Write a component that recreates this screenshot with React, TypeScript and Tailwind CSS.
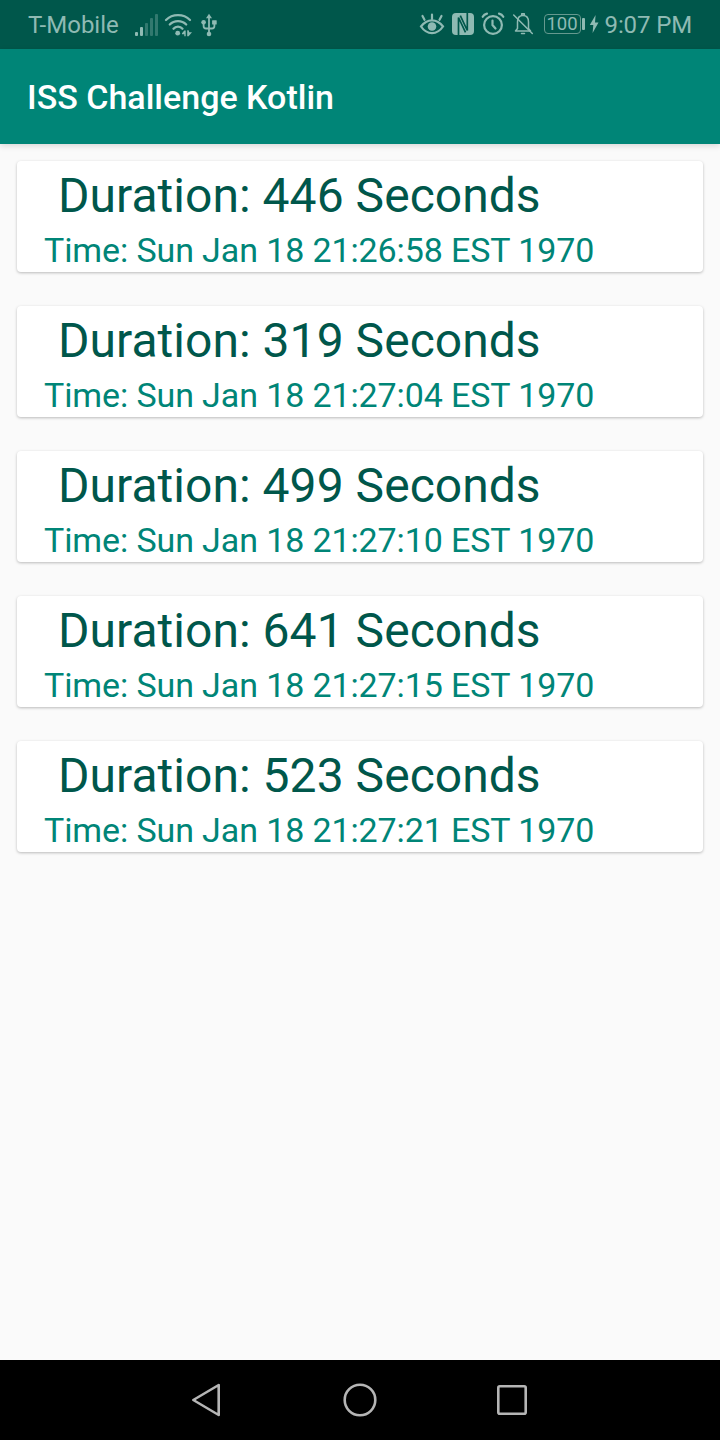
import React from "react";

const passes = [
  { duration: 446, time: "Sun Jan 18 21:26:58 EST 1970" },
  { duration: 319, time: "Sun Jan 18 21:27:04 EST 1970" },
  { duration: 499, time: "Sun Jan 18 21:27:10 EST 1970" },
  { duration: 641, time: "Sun Jan 18 21:27:15 EST 1970" },
  { duration: 523, time: "Sun Jan 18 21:27:21 EST 1970" },
];

function SignalIcon() {
  return (
    <svg width="24" height="24" viewBox="0 0 24 24" fill="currentColor" className="shrink-0">
      <rect x="1" y="19" width="3" height="4" rx="1" />
      <rect x="6" y="14" width="3" height="9" rx="1" />
      <g opacity="0.35">
        <rect x="11" y="10" width="3" height="13" rx="1" />
        <rect x="16" y="5" width="3" height="18" rx="1" />
        <rect x="21" y="1" width="3" height="22" rx="1" />
      </g>
    </svg>
  );
}

function WifiIcon() {
  return (
    <svg width="28" height="24" viewBox="0 0 28 24" fill="none" stroke="currentColor" strokeWidth="2.3" strokeLinecap="round" className="shrink-0">
      <path d="M2 7C8.500 .6 19.500 .6 26 7" />
      <path d="M5.800 11.500C10.200 7 17.800 7 22.200 11.500" />
      <path d="M9.500 15.700C11.800 12.900 16.200 12.900 18.500 15.700" />
      <circle cx="13.700" cy="20.200" r="2.400" fill="currentColor" stroke="none" />
      <path d="M18 20.200 20.300 17.600H21.700V23.200H20.300V21.200H18ZM23.200 17.200H24.600L25.300 19.200H28L24.600 23.200H23.200Z" fill="currentColor" stroke="none" />
    </svg>
  );
}

function UsbIcon() {
  return (
    <svg width="18" height="24" viewBox="0 0 18 24" fill="none" stroke="currentColor" strokeWidth="1.800" className="shrink-0">
      <path d="M9 4V21M3.600 9V13Q3.600 15.500 6 15.500H12Q14.400 15.500 14.400 13V9" />
      <path d="M9 .8 12 5.200H6Z" fill="currentColor" stroke="none" />
      <circle cx="3.600" cy="9.300" r="2.300" fill="currentColor" stroke="none" />
      <rect x="12.100" y="7.200" width="4.600" height="4.400" rx=".5" fill="currentColor" stroke="none" />
      <circle cx="9" cy="21" r="2.300" fill="currentColor" stroke="none" />
    </svg>
  );
}

function EyeIcon() {
  return (
    <svg width="26" height="24" viewBox="0 0 26 24" fill="none" stroke="currentColor" strokeWidth="2.200" strokeLinecap="round" className="shrink-0">
      <path d="M2 14.500C8 6.300 18 6.300 24 14.500C18 23.300 8 23.300 2 14.500Z" />
      <circle cx="13" cy="14.500" r="4.300" fill="currentColor" stroke="none" />
      <path d="M3.500 4 5.500 7.800M13 2.500V7M22.500 4 20.500 7.800" />
    </svg>
  );
}

function NfcIcon() {
  return (
    <svg width="22" height="22" viewBox="0 0 22 22" fill="none" className="shrink-0">
      <rect width="22" height="22" rx="4" fill="currentColor" />
      <path d="M6.500 22V4.500L13.500 19.300" stroke="#00574b" strokeWidth="1.700" />
      <path d="M15.300 0V17.500L8.300 2.700" stroke="#00574b" strokeWidth="1.700" />
    </svg>
  );
}

function AlarmIcon() {
  return (
    <svg width="24" height="24" viewBox="0 0 24 24" fill="none" stroke="currentColor" strokeWidth="2.200" strokeLinecap="round" className="shrink-0">
      <circle cx="12" cy="13" r="8.900" />
      <path d="M1.700 4.800Q3 2.300 6 1.700M18 1.700Q21 2.300 22.300 4.800M11.500 8.500V13L14.500 16.500" />
    </svg>
  );
}

function BellOffIcon() {
  return (
    <svg width="22" height="24" viewBox="0 0 22 24" fill="none" stroke="currentColor" strokeWidth="1.500" strokeLinecap="round" strokeLinejoin="round" className="shrink-0">
      <path d="M5.500 16.500V10Q5.500 3.500 11 3.500T16.500 10V16.500L18.500 19H3.500L5.500 16.500M9.700 3V1.700H12.300V3M9.500 21.500H12.500" />
      <path d="M1.700 3 20.300 21.500" />
    </svg>
  );
}

function Battery() {
  return (
    <div className="flex items-center">
      <div className="flex h-[20px] w-[37px] items-center justify-center rounded-[4px] border border-[#66998f] text-[18.500px] leading-[18px]">
        <span>100</span>
      </div>
      <div className="ml-[1px] h-[12px] w-[3px] rounded-[1px] bg-[#8fbab3]" />
    </div>
  );
}

function StatusBar() {
  return (
    <header className="flex h-[49px] shrink-0 items-center justify-between bg-[#00574b] pr-[28px] pl-[28px] text-[24px] leading-[28px] text-[#8fbab3]">
      <div className="flex items-center">
        <span className="w-[106px]">T-Mobile</span>
        <SignalIcon />
        <div className="ml-[6px] flex"><WifiIcon /></div>
        <div className="ml-[8px] flex"><UsbIcon /></div>
      </div>
      <div className="flex items-center">
        <div className="mb-[2px] flex"><EyeIcon /></div>
        <div className="mb-[1px] ml-[7px] flex"><NfcIcon /></div>
        <div className="mb-[1px] ml-[7px] flex"><AlarmIcon /></div>
        <div className="mr-[10px] mb-[1px] ml-[7px] flex"><BellOffIcon /></div>
        <div className="mb-[1px]"><Battery /></div>
        <svg width="10" height="20" viewBox="0 0 10 20" fill="currentColor" className="mr-[6px] mb-[2px] ml-[4px] shrink-0">
          <path d="M6.600 1 .8 11H4.300L3.600 19 9.500 8.500H6Z" />
        </svg>
        <span className="tracking-[-0.13px] whitespace-nowrap">9:07 PM</span>
      </div>
    </header>
  );
}

function NavigationBar() {
  return (
    <nav className="flex h-[80px] shrink-0 items-center justify-center gap-[112px] bg-black text-[#b5b5b5]">
      <svg width="40" height="40" viewBox="0 0 40 40" fill="none" stroke="currentColor" strokeWidth="2.600" strokeLinejoin="round">
        <path d="M5.300 20 30.700 5V35Z" />
      </svg>
      <svg width="40" height="40" viewBox="0 0 40 40" fill="none" stroke="currentColor" strokeWidth="2.600">
        <circle cx="20" cy="20" r="15.300" />
      </svg>
      <svg width="40" height="40" viewBox="0 0 40 40" fill="none" stroke="currentColor" strokeWidth="2.600">
        <rect x="6.300" y="6.300" width="27.400" height="27.400" rx="1.500" />
      </svg>
    </nav>
  );
}

export default function App() {
  return (
    <div className="flex h-[1440px] w-[720px] flex-col overflow-hidden bg-[#fafafa] font-[Roboto,sans-serif]">
      <StatusBar />
      <div className="relative flex h-[95px] shrink-0 items-center bg-[#008577] pl-[27px] shadow-[0_2px_6px_rgba(0,0,0,0.14)]">
        <h1 className="text-[34px] leading-[40px] font-medium text-white">ISS Challenge Kotlin</h1>
      </div>
      <main className="flex grow flex-col gap-[34px] px-[17px] pt-[17px]">
        {passes.map((pass) => (
          <article key={pass.time} className="h-[111px] rounded-[4px] bg-white shadow-[0_1px_3px_rgba(0,0,0,0.26)]">
            <div className="pt-[7px] pl-[41px] text-[48px] leading-[56px] tracking-[0.04px] text-[#00574b]">Duration: {pass.duration} Seconds</div>
            <div className="pt-[6px] pl-[27px] text-[34px] leading-[40px] tracking-[-0.11px] text-[#008577]">Time: {pass.time}</div>
          </article>
        ))}
      </main>
      <NavigationBar />
    </div>
  );
}
